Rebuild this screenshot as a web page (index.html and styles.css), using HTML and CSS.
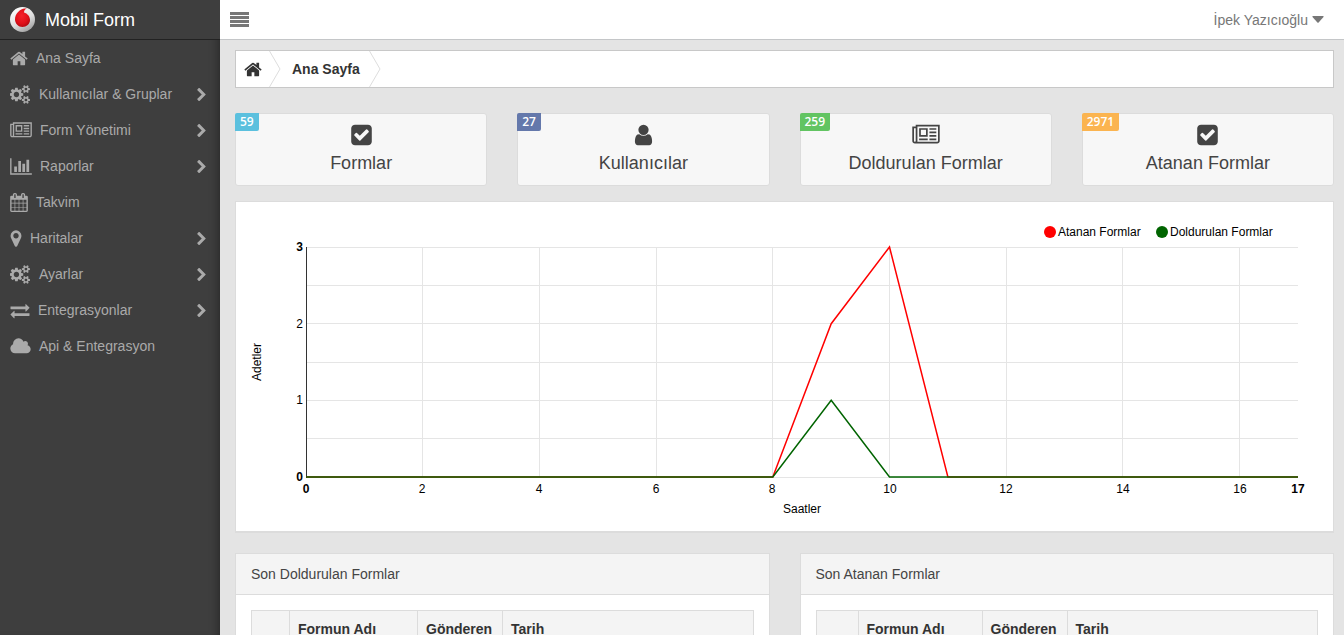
FILE: index.html
```html
<!DOCTYPE html>
<html lang="tr">
<head>
<meta charset="utf-8">
<meta name="viewport" content="width=device-width, initial-scale=1">
<title>Mobil Form</title>
<link rel="stylesheet" href="styles.css">
</head>
<body>
<svg class="sprite" aria-hidden="true">
  <symbol id="home" viewBox="64 0 1664 1792"><path d="M1472 992v480q0 26-19 45t-45 19h-384v-384h-256v384h-384q-26 0-45-19t-19-45v-480q0-1 .5-3t.5-3l575-474 575 474q1 2 1 6zm223-69l-62 74q-8 9-21 11h-3q-13 0-21-7l-692-577-692 577q-12 8-24 7-13-2-21-11l-62-74q-8-10-7-23.5t11-21.5l719-599q32-26 76-26t76 26l244 204v-195q0-14 9-23t23-9h192q14 0 23 9t9 23v408l219 182q10 8 11 21.5t-7 23.5z"/></symbol>
  <symbol id="cogs" viewBox="0 0 1920 1792"><path d="M832 896q0-106-75-181t-181-75-181 75-75 181 75 181 181 75 181-75 75-181zm768 512q0-52-38-90t-90-38-90 38-38 90q0 53 37.500 90.500t90.500 37.500 90.500-37.500 37.500-90.500zm0-1024q0-52-38-90t-90-38-90 38-38 90q0 53 37.500 90.500t90.500 37.500 90.500-37.500 37.500-90.500zm-384 421v185q0 10-7 19.500t-16 10.500l-155 24q-11 35-32 76 34 48 90 115 7 11 7 20 0 12-7 19-23 30-82.500 89.500t-78.500 59.500q-11 0-21-7l-115-90q-37 19-77 31-11 108-23 155-7 24-30 24h-186q-11 0-20-7.500t-10-17.500l-23-153q-34-10-75-31l-118 89q-7 7-20 7-11 0-21-8-144-133-144-160 0-9 7-19 10-14 41-53t47-61q-23-44-35-82l-152-24q-10-1-17-9.500t-7-19.500v-185q0-10 7-19.500t16-10.500l155-24q11-35 32-76-34-48-90-115-7-11-7-20 0-12 7-20 22-30 82-89t79-59q11 0 21 7l115 90q34-18 77-32 11-108 23-154 7-24 30-24h186q11 0 20 7.500t10 17.500l23 153q34 10 75 31l118-89q8-7 20-7 11 0 21 8 144 133 144 160 0 8-7 19-12 16-42 54t-45 60q23 48 34 82l152 23q10 2 17 10.500t7 19.500zm640 533v140q0 16-149 31-12 27-30 52 51 113 51 138 0 4-4 7-122 71-124 71-8 0-46-47t-52-68q-20 2-30 2t-30-2q-14 21-52 68t-46 47q-2 0-124-71-4-3-4-7 0-25 51-138-18-25-30-52-149-15-149-31v-140q0-16 149-31 13-29 30-52-51-113-51-138 0-4 4-7 4-2 35-20t59-34 30-16q8 0 46 46.500t52 67.500q20-2 30-2t30 2q51-71 92-112l6-2q4 0 124 70 4 3 4 7 0 25-51 138 17 23 30 52 149 15 149 31zm0-1024v140q0 16-149 31-12 27-30 52 51 113 51 138 0 4-4 7-122 71-124 71-8 0-46-47t-52-68q-20 2-30 2t-30-2q-14 21-52 68t-46 47q-2 0-124-71-4-3-4-7 0-25 51-138-18-25-30-52-149-15-149-31v-140q0-16 149-31 13-29 30-52-51-113-51-138 0-4 4-7 4-2 35-20t59-34 30-16q8 0 46 46.500t52 67.500q20-2 30-2t30 2q51-71 92-112l6-2q4 0 124 70 4 3 4 7 0 25-51 138 17 23 30 52 149 15 149 31z"/></symbol>
  <symbol id="news" viewBox="0 0 2048 1792"><path d="M1024 512h-384v384h384v-384zm128 640v128h-640v-128h640zm0-768v640h-640v-640h640zm640 768v128h-512v-128h512zm0-256v128h-512v-128h512zm0-256v128h-512v-128h512zm0-256v128h-512v-128h512zm-1536 960v-960h-128v960q0 26 19 45t45 19 45-19 19-45zm1664 0v-1088h-1536v1088q0 33-11 64h1483q26 0 45-19t19-45zm128-1216v1216q0 80-56 136t-136 56h-1664q-80 0-136-56t-56-136v-1088h256v-128h1792z"/></symbol>
  <symbol id="chart" viewBox="0 0 2048 1792"><path d="M640 896v512h-256v-512h256zm384-512v1024h-256v-1024h256zm1024 1152v128h-2048v-1536h128v1408h1920zm-640-896v768h-256v-768h256zm384-384v1152h-256v-1152h256z"/></symbol>
  <symbol id="calendar" viewBox="64 0 1664 1792"><path d="M192 1664h288v-288h-288v288zm352 0h320v-288h-320v288zm-352-352h288v-320h-288v320zm352 0h320v-320h-320v320zm-352-384h288v-288h-288v288zm736 736h320v-288h-320v288zm-384-736h320v-288h-320v288zm768 736h288v-288h-288v288zm-384-352h320v-320h-320v320zm-352-864v-288q0-13-9.500-22.500t-22.500-9.500h-64q-13 0-22.500 9.500t-9.500 22.500v288q0 13 9.500 22.500t22.500 9.500h64q13 0 22.500-9.500t9.500-22.500zm736 864h288v-320h-288v320zm-384-384h320v-288h-320v288zm384 0h288v-288h-288v288zm32-480v-288q0-13-9.500-22.500t-22.500-9.500h-64q-13 0-22.500 9.500t-9.500 22.500v288q0 13 9.500 22.500t22.500 9.500h64q13 0 22.500-9.500t9.500-22.500zm384-64v1280q0 52-38 90t-90 38h-1408q-52 0-90-38t-38-90v-1280q0-52 38-90t90-38h128v-96q0-66 47-113t113-47h64q66 0 113 47t47 113v96h384v-96q0-66 47-113t113-47h64q66 0 113 47t47 113v96h128q52 0 90 38t38 90z"/></symbol>
  <symbol id="marker" viewBox="0 0 1024 1792"><path d="M768 640q0-106-75-181t-181-75-181 75-75 181 75 181 181 75 181-75 75-181zm256 0q0 109-33 179l-364 774q-16 33-47.500 52t-67.500 19-67.500-19-46.500-52l-365-774q-33-70-33-179 0-212 150-362t362-150 362 150 150 362z"/></symbol>
  <symbol id="exchange" viewBox="0 0 1792 1792"><path d="M1792 1184v192q0 13-9.500 22.500t-22.500 9.500h-1376v192q0 13-9.500 22.500t-22.500 9.500q-12 0-24-10l-319-320q-9-9-9-22 0-14 9-23l320-320q9-9 23-9 13 0 22.500 9.500t9.500 22.500v192h1376q13 0 22.500 9.500t9.500 22.500zm0-544q0 14-9 23l-320 320q-9 9-23 9-13 0-22.500-9.500t-9.500-22.500v-192h-1376q-13 0-22.500-9.500t-9.500-22.500v-192q0-13 9.500-22.500t22.500-9.500h1376v-192q0-14 9-23t23-9q12 0 24 10l319 319q9 9 9 23z"/></symbol>
  <symbol id="cloud" viewBox="0 0 1920 1792"><path d="M1920 1152q0 159-112.500 271.500t-271.500 112.500h-1088q-185 0-316.500-131.500t-131.500-316.500q0-132 71-241.500t187-163.500q-2-28-2-43 0-212 150-362t362-150q158 0 286.500 88t187.500 230q70-62 166-62 106 0 181 75t75 181q0 75-41 138 129 30 213 134.500t84 239.500z"/></symbol>
  <symbol id="chevron" viewBox="90 180 1036 1580"><path d="M1107 1015l-742 742q-19 19-45 19t-45-19l-166-166q-19-19-19-45t19-45l531-531-531-531q-19-19-19-45t19-45l166-166q19-19 45-19t45 19l742 742q19 19 19 45t-19 45z"/></symbol>
  <symbol id="check" viewBox="128 0 1536 1792"><path d="M813 1299l614-614q19-19 19-45t-19-45l-102-102q-19-19-45-19t-45 19l-467 467-211-211q-19-19-45-19t-45 19l-102 102q-19 19-19 45t19 45l358 358q19 19 45 19t45-19zm851-883v960q0 119-84.500 203.500t-203.500 84.500h-960q-119 0-203.500-84.500t-84.500-203.500v-960q0-119 84.500-203.500t203.500-84.500h960q119 0 203.500 84.500t84.500 203.500z"/></symbol>
  <symbol id="user" viewBox="256 0 1280 1792"><path d="M1536 1399q0 109-62.500 187t-150.500 78h-854q-88 0-150.500-78t-62.500-187q0-85 8.500-160.500t31.500-152 58.500-131 94-89 134.500-34.500q131 128 313 128t313-128q76 0 134.500 34.500t94 89 58.500 131 31.500 152 8.500 160.500zm-256-887q0 159-112.500 271.500t-271.500 112.500-271.500-112.500-112.500-271.500 112.500-271.500 271.500-112.500 271.500 112.500 112.500 271.500z"/></symbol>
</svg>

<div class="app">
  <aside class="sidebar">
    <a class="brand" href="#">
      <svg class="brand-logo" viewBox="0 0 50 50" aria-hidden="true">
        <defs>
          <linearGradient id="silver" x1="0.2" y1="0" x2="0.8" y2="1"><stop offset="0" stop-color="#fff"/><stop offset="0.55" stop-color="#dedede"/><stop offset="1" stop-color="#999"/></linearGradient>
          <radialGradient id="drop" cx="0.45" cy="0.4" r="0.6"><stop offset="0" stop-color="#f5222c"/><stop offset="0.7" stop-color="#e01019"/><stop offset="1" stop-color="#b80a12"/></radialGradient>
        </defs>
        <circle cx="25" cy="25" r="25" fill="url(#silver)"/>
        <path d="M34 3C30 4 28 7 28 11C35 13 40 19 40 26C40 34 33 40 25 40C17 40 10 33 10 25C10 13 20 4 30 3Z" fill="url(#drop)"/>
      </svg>
      <span>Mobil Form</span>
    </a>
    <nav class="menu">
      <a href="#"><svg class="icon w18"><use href="#home"/></svg><span>Ana Sayfa</span></a>
      <a href="#"><svg class="icon w21"><use href="#cogs"/></svg><span>Kullanıcılar &amp; Gruplar</span><svg class="arrow"><use href="#chevron"/></svg></a>
      <a href="#"><svg class="icon w22"><use href="#news"/></svg><span>Form Yönetimi</span><svg class="arrow"><use href="#chevron"/></svg></a>
      <a href="#"><svg class="icon w22"><use href="#chart"/></svg><span>Raporlar</span><svg class="arrow"><use href="#chevron"/></svg></a>
      <a href="#"><svg class="icon w18"><use href="#calendar"/></svg><span>Takvim</span></a>
      <a href="#"><svg class="icon w12"><use href="#marker"/></svg><span>Haritalar</span><svg class="arrow"><use href="#chevron"/></svg></a>
      <a href="#"><svg class="icon w21"><use href="#cogs"/></svg><span>Ayarlar</span><svg class="arrow"><use href="#chevron"/></svg></a>
      <a href="#"><svg class="icon w20"><use href="#exchange"/></svg><span>Entegrasyonlar</span><svg class="arrow"><use href="#chevron"/></svg></a>
      <a href="#"><svg class="icon w21"><use href="#cloud"/></svg><span>Api &amp; Entegrasyon</span></a>
    </nav>
  </aside>

  <div class="page">
    <header class="topbar">
      <button class="toggle" type="button" aria-label="Menü"><i></i><i></i><i></i><i></i></button>
      <button class="account" type="button">İpek Yazıcıoğlu <svg class="caret" viewBox="0 0 12 7" aria-hidden="true"><path d="M1 0H11Q12 0 11.500 1L6.600 6.500Q6 7 5.400 6.500L.5 1Q0 0 1 0Z"/></svg></button>
    </header>

    <main class="content">
      <nav class="breadcrumb" aria-label="Konum">
        <a class="crumb-home" href="#" aria-label="Ana Sayfa"><svg class="icon w18"><use href="#home"/></svg></a>
        <svg class="sep" viewBox="0 0 12 36" aria-hidden="true"><path d="M.5 0L11 18L.5 36"/></svg>
        <a class="crumb" href="#">Ana Sayfa</a>
        <svg class="sep" viewBox="0 0 12 36" aria-hidden="true"><path d="M.5 0L11 18L.5 36"/></svg>
      </nav>

      <section class="stats">
        <a class="stat" href="#"><span class="badge blue">59</span><svg class="big w21"><use href="#check"/></svg><span>Formlar</span></a>
        <a class="stat" href="#"><span class="badge indigo">27</span><svg class="big w19"><use href="#user"/></svg><span>Kullanıcılar</span></a>
        <a class="stat" href="#"><span class="badge green">259</span><svg class="big w28"><use href="#news"/></svg><span>Doldurulan Formlar</span></a>
        <a class="stat" href="#"><span class="badge orange">2971</span><svg class="big w21"><use href="#check"/></svg><span>Atanan Formlar</span></a>
      </section>

      <section class="card">
        <svg class="plot" viewBox="0 0 1097 329" role="img" aria-label="Saatlere göre form adetleri">
          <path class="grid" d="M70 45.500H1062M70 83.500H1062M70 121.500H1062M70 160.500H1062M70 198.500H1062M70 236.500H1062M70 275.500H1062M186.500 45V275M303.500 45V275M420.500 45V275M536.500 45V275M653.500 45V275M770.500 45V275M886.500 45V275M1003.500 45V275"/>
          <path class="axis" d="M70.500 45V276"/>
          <polyline class="line red" points="70,275 536.800,275 595.200,121.700 653.500,45 711.900,275 1062,275"/>
          <polyline class="line dark" points="70,275 536.800,275 595.200,198.300 653.500,275 1062,275"/>
          <g class="end">
            <text class="strong" x="67" y="49">3</text>
            <text x="67" y="126">2</text>
            <text x="67" y="202">1</text>
            <text class="strong" x="67" y="279">0</text>
          </g>
          <g class="mid">
            <text class="strong" x="70" y="291">0</text><text x="186" y="291">2</text><text x="303" y="291">4</text><text x="420" y="291">6</text><text x="536" y="291">8</text><text x="654" y="291">10</text><text x="770" y="291">12</text><text x="887" y="291">14</text><text x="1004" y="291">16</text><text class="strong" x="1062" y="291">17</text>
            <text x="566" y="311">Saatler</text>
            <text transform="translate(25 160) rotate(-90)">Adetler</text>
          </g>
          <circle cx="814" cy="30" r="6" fill="#f00"/><text x="822" y="34">Atanan Formlar</text>
          <circle cx="926" cy="30" r="6" fill="#006400"/><text x="934" y="34">Doldurulan Formlar</text>
        </svg>
      </section>

      <div class="panels">
        <section class="panel">
          <h2>Son Doldurulan Formlar</h2>
          <div class="panel-body">
            <table>
              <colgroup><col class="c38"><col class="c128"><col class="c85"><col></colgroup>
              <thead><tr><th></th><th>Formun Adı</th><th>Gönderen</th><th>Tarih</th></tr></thead>
            </table>
          </div>
        </section>
        <section class="panel">
          <h2>Son Atanan Formlar</h2>
          <div class="panel-body">
            <table>
              <colgroup><col class="c42"><col class="c124"><col class="c85"><col></colgroup>
              <thead><tr><th></th><th>Formun Adı</th><th>Gönderen</th><th>Tarih</th></tr></thead>
            </table>
          </div>
        </section>
      </div>
    </main>
  </div>
</div>
</body>
</html>
```

FILE: styles.css
```css
* { box-sizing: border-box; }

body {
  margin: 0;
  font: 14px/20px "Liberation Sans", Arial, sans-serif;
  color: #333;
  background: #e4e4e4;
}

a { color: inherit; text-decoration: none; }
button { font: inherit; color: #777; border: 0; background: none; padding: 0; cursor: pointer; }
svg { fill: currentColor; flex: none; }
.sprite { position: absolute; width: 0; height: 0; }

.app { display: flex; height: 100vh; overflow: hidden; }

/* Sidebar */
.sidebar {
  flex: 0 0 220px;
  background: #3e3e3e;
  color: #aaa;
  box-shadow: inset -8px 0 8px -6px rgba(0, 0, 0, 0.35);
}
.brand {
  display: flex;
  align-items: center;
  gap: 10px;
  height: 40px;
  padding: 0 10px;
  border-bottom: 1px solid #222;
  background: #3e3e3e;
  color: #fff;
  font-size: 18px;
}
.brand-logo { width: 25px; height: 25px; }
.menu a { display: flex; align-items: center; gap: 8px; height: 36px; padding: 0 14px 0 10px; }
.icon { height: 19px; }
.w12 { width: 12px; }
.w18 { width: 18px; }
.w19 { width: 19px; }
.w20 { width: 20px; }
.w21 { width: 21px; }
.w22 { width: 22px; }
.w28 { width: 28px; }
.arrow { width: 9px; height: 13px; margin-left: auto; }

/* Top bar */
.page { flex: 1; min-width: 0; }
.topbar {
  display: flex;
  justify-content: space-between;
  align-items: center;
  height: 40px;
  padding: 0 20px 0 10px;
  background: #fff;
  border-bottom: 1px solid #c4c6c8;
}
.toggle { display: grid; gap: 1px; width: 19px; }
.toggle i { height: 3px; background: #777; }
.account { display: flex; align-items: center; gap: 4px; }
.caret { width: 12px; height: 7px; }

.content { padding: 10px 10px 0 15px; }

/* Breadcrumb */
.breadcrumb {
  display: flex;
  align-items: center;
  height: 38px;
  margin-bottom: 25px;
  background: #fff;
  border: 1px solid #c8c8c8;
  font-weight: bold;
}
.crumb-home { display: flex; padding: 0 7px 0 8px; }
.crumb { padding: 0 9px 0 11px; }
.sep { width: 12px; height: 36px; fill: none; stroke: #ddd; }

/* Counters */
.stats { display: grid; grid-template-columns: repeat(4, 1fr); gap: 30px; margin-bottom: 15px; }
.stat {
  position: relative;
  display: flex;
  flex-direction: column;
  align-items: center;
  gap: 4px;
  padding: 9px 0 10px;
  background: #f7f7f7;
  border: 1px solid #dcdcdc;
  border-radius: 3px;
  color: #444;
  font-size: 18px;
  line-height: 24px;
}
.big { height: 24px; }
.badge {
  position: absolute;
  top: -1px;
  left: -1px;
  padding: 0 5px;
  border-radius: 2px 0 2px 0;
  color: #fff;
  font: 600 12px/18px "Open Sans", "Liberation Sans", sans-serif;
}
.blue { background: #5bc0de; }
.indigo { background: #6478ab; }
.green { background: #62c462; }
.orange { background: #fbb450; }

/* Chart */
.card { margin-bottom: 20px; background: #fff; border: 1px solid #dcdcdc; border-bottom-width: 2px; }
.plot { display: block; width: 100%; height: auto; fill: #000; font-size: 12px; }
.grid { stroke: #e5e5e5; shape-rendering: crispEdges; }
.axis { stroke: #333; shape-rendering: crispEdges; }
.line { fill: none; stroke-width: 1.5px; }
.red { stroke: #f00; }
.dark { stroke: #006400; }
.mid { text-anchor: middle; }
.end { text-anchor: end; }
.strong { font-weight: bold; }

/* Panels */
.panels { display: grid; grid-template-columns: repeat(2, 1fr); gap: 30px; }
.panel { background: #fff; border: 1px solid #dcdcdc; }
.panel h2 {
  margin: 0;
  padding: 10px 15px;
  background: #f4f4f4;
  border-bottom: 1px solid #dcdcdc;
  font-size: 14px;
  font-weight: normal;
  color: #444;
}
.panel-body { padding: 15px; }
table { width: 100%; table-layout: fixed; border-collapse: collapse; }
th { padding: 8px; border: 1px solid #dcdcdc; background: #f4f4f4; text-align: left; }
.c38 { width: 38px; }
.c42 { width: 42px; }
.c85 { width: 85px; }
.c124 { width: 124px; }
.c128 { width: 128px; }
```
